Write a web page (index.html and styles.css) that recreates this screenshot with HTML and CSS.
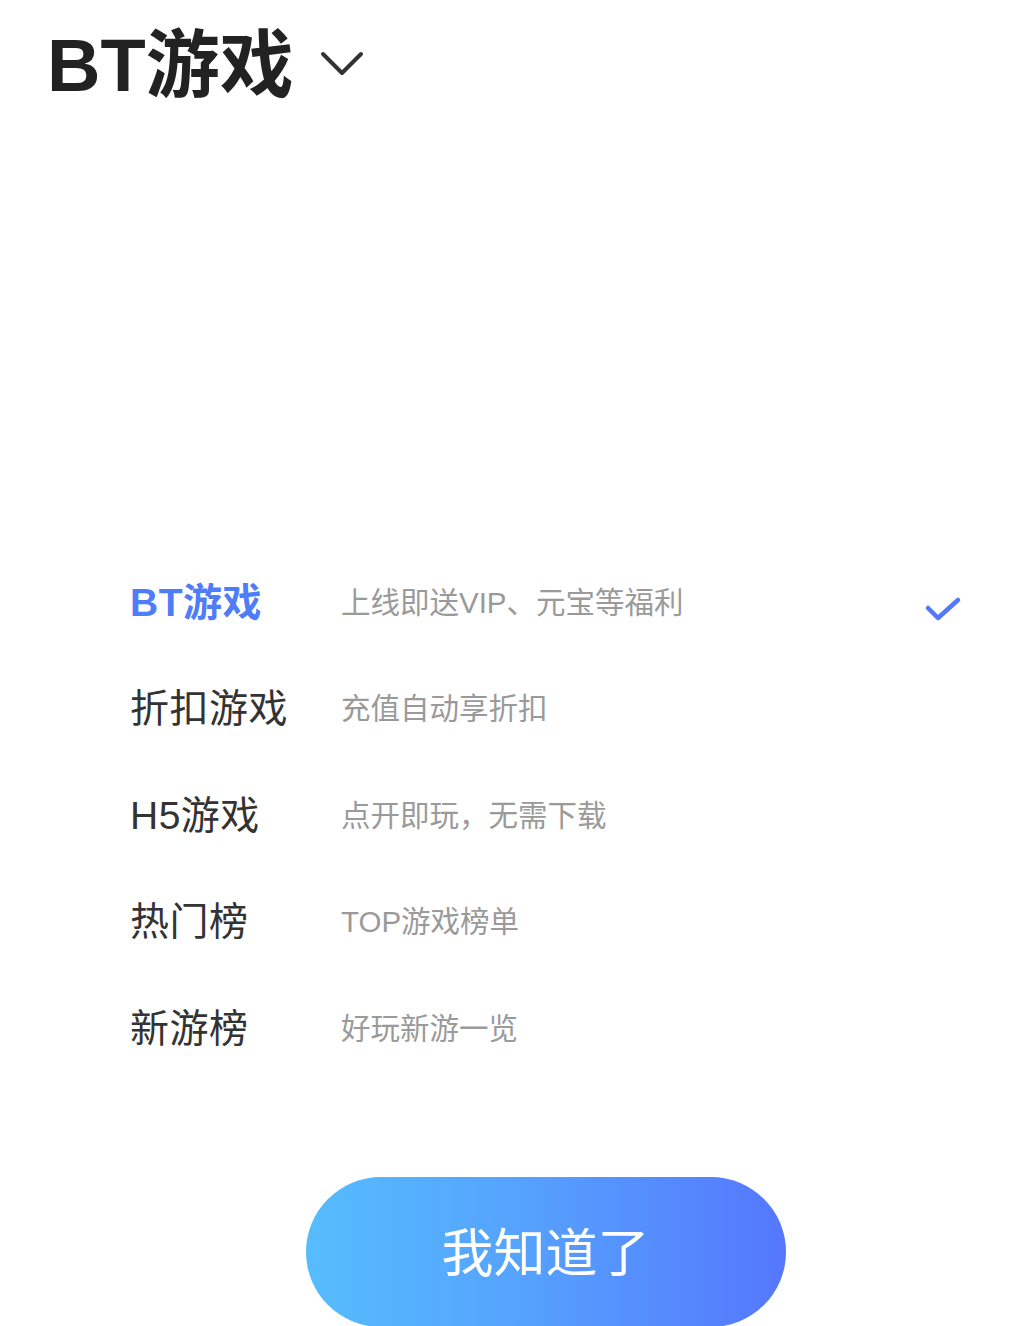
FILE: index.html
```html
<!DOCTYPE html>
<html lang="zh">
<head>
<meta charset="utf-8">
<link rel="stylesheet" href="styles.css">
</head>
<body>
<div class="page">
  <header class="header">
    <h1 class="title">BT游戏</h1>
    <svg class="chevron" width="46" height="28" viewBox="0 0 46 28"><path d="M4 4 L23 23 L42 4" fill="none" stroke="#333" stroke-width="4" stroke-linecap="round" stroke-linejoin="round"/></svg>
  </header>
  <ul class="list">
    <li class="row active">
      <span class="name">BT游戏</span>
      <span class="desc">上线即送VIP、元宝等福利</span>
      <svg class="check" width="40" height="30" viewBox="0 0 40 30"><path d="M5 13 L15 23 L35 5" fill="none" stroke="#5378fb" stroke-width="4.5" stroke-linecap="round" stroke-linejoin="round"/></svg>
    </li>
    <li class="row"><span class="name">折扣游戏</span><span class="desc">充值自动享折扣</span></li>
    <li class="row"><span class="name">H5游戏</span><span class="desc">点开即玩，无需下载</span></li>
    <li class="row"><span class="name">热门榜</span><span class="desc">TOP游戏榜单</span></li>
    <li class="row"><span class="name">新游榜</span><span class="desc">好玩新游一览</span></li>
  </ul>
  <div class="footer">
    <button class="btn">我知道了</button>
  </div>
</div>
</body>
</html>
```
FILE: styles.css
```css
html, body {
  margin: 0;
  padding: 0;
  background: #fff;
}
body {
  font-family: "Liberation Sans", "Noto Sans CJK SC", "Noto Sans", sans-serif;
  width: 1011px;
  height: 1326px;
  overflow: hidden;
}
.page {
  display: flex;
  flex-direction: column;
}
.header {
  display: flex;
  align-items: center;
  padding: 15px 0 0 47px;
  height: 101px;
}
.title {
  margin: 0;
  font-size: 74px;
  font-weight: 700;
  color: #222;
  line-height: 100px;
  letter-spacing: 0;
}
.chevron {
  margin-left: 25px;
  margin-top: -4px;
}
.list {
  list-style: none;
  margin: 433px 0 0 0;
  padding: 0 0 0 130px;
}
.row {
  display: flex;
  align-items: center;
  height: 106.5px;
}
.name {
  width: 211px;
  font-size: 39px;
  color: #333;
  line-height: 1;
  letter-spacing: 0.5px;
}
.active .name {
  color: #4f7cf9;
  font-weight: 700;
}
.desc {
  flex: 1;
  font-size: 29.5px;
  color: #9a9a9a;
  line-height: 1;
}
.check {
  margin-right: 48px;
  margin-top: 16px;
}
.footer {
  display: flex;
  justify-content: center;
  margin-top: 95px;
  padding-left: 80px;
}
.btn {
  width: 480px;
  height: 150px;
  border: none;
  border-radius: 75px;
  background: linear-gradient(90deg, #56bdfd 0%, #55a2fd 45%, #5577fd 100%);
  color: #fff;
  font-family: "Noto Sans CJK SC", "Noto Sans", sans-serif;
  font-size: 52px;
  padding: 0 0 4px 0;
}
```
